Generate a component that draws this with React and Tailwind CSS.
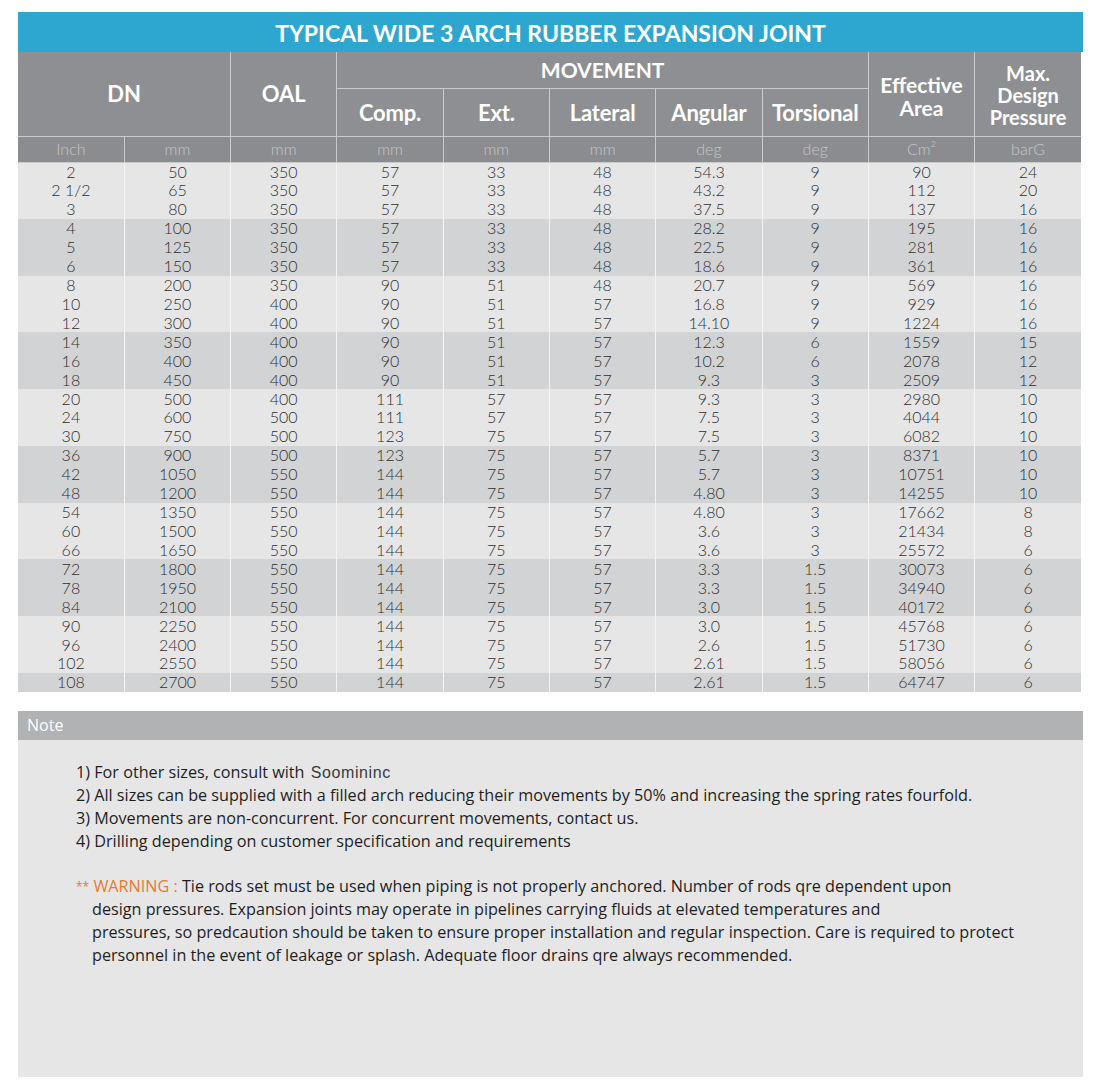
import React from 'react';

const rows = [
    ['2', '50', '350', '57', '33', '48', '54.3', '9', '90', '24'],
    ['2 1/2', '65', '350', '57', '33', '48', '43.2', '9', '112', '20'],
    ['3', '80', '350', '57', '33', '48', '37.5', '9', '137', '16'],
    ['4', '100', '350', '57', '33', '48', '28.2', '9', '195', '16'],
    ['5', '125', '350', '57', '33', '48', '22.5', '9', '281', '16'],
    ['6', '150', '350', '57', '33', '48', '18.6', '9', '361', '16'],
    ['8', '200', '350', '90', '51', '48', '20.7', '9', '569', '16'],
    ['10', '250', '400', '90', '51', '57', '16.8', '9', '929', '16'],
    ['12', '300', '400', '90', '51', '57', '14.10', '9', '1224', '16'],
    ['14', '350', '400', '90', '51', '57', '12.3', '6', '1559', '15'],
    ['16', '400', '400', '90', '51', '57', '10.2', '6', '2078', '12'],
    ['18', '450', '400', '90', '51', '57', '9.3', '3', '2509', '12'],
    ['20', '500', '400', '111', '57', '57', '9.3', '3', '2980', '10'],
    ['24', '600', '500', '111', '57', '57', '7.5', '3', '4044', '10'],
    ['30', '750', '500', '123', '75', '57', '7.5', '3', '6082', '10'],
    ['36', '900', '500', '123', '75', '57', '5.7', '3', '8371', '10'],
    ['42', '1050', '550', '144', '75', '57', '5.7', '3', '10751', '10'],
    ['48', '1200', '550', '144', '75', '57', '4.80', '3', '14255', '10'],
    ['54', '1350', '550', '144', '75', '57', '4.80', '3', '17662', '8'],
    ['60', '1500', '550', '144', '75', '57', '3.6', '3', '21434', '8'],
    ['66', '1650', '550', '144', '75', '57', '3.6', '3', '25572', '6'],
    ['72', '1800', '550', '144', '75', '57', '3.3', '1.5', '30073', '6'],
    ['78', '1950', '550', '144', '75', '57', '3.3', '1.5', '34940', '6'],
    ['84', '2100', '550', '144', '75', '57', '3.0', '1.5', '40172', '6'],
    ['90', '2250', '550', '144', '75', '57', '3.0', '1.5', '45768', '6'],
    ['96', '2400', '550', '144', '75', '57', '2.6', '1.5', '51730', '6'],
    ['102', '2550', '550', '144', '75', '57', '2.61', '1.5', '58056', '6'],
    ['108', '2700', '550', '144', '75', '57', '2.61', '1.5', '64747', '6'],
];

const units = ['Inch', 'mm', 'mm', 'mm', 'mm', 'mm', 'deg', 'deg', 'Cm²', 'barG'];

export default function App() {
    const head = 'border border-[#c9cacc] text-white font-bold text-center align-middle';
    return (
        <div className="bg-white w-[1101px] h-[1090px] pt-3 px-[18px] font-['Lato',sans-serif]">
            {/* Title */}
            <div className="h-10 bg-[#2ea7d0] flex items-center justify-center pt-0.5 text-white font-bold text-[23px]">
                TYPICAL WIDE 3 ARCH RUBBER EXPANSION JOINT
            </div>

            <table className="w-[1063px] table-fixed border-collapse">
                <colgroup>
                    {units.map((u, i) => <col key={i} className="w-[106.3px]" />)}
                </colgroup>
                <thead className="bg-[#8e8f92]">
                    <tr className="h-9">
                        <th rowSpan={2} colSpan={2} className={`${head} border-t-0 border-l-0 text-[22px]`}>DN</th>
                        <th rowSpan={2} className={`${head} border-t-0 text-[22px]`}>OAL</th>
                        <th colSpan={5} className={`${head} border-t-0 text-[21px] leading-none`}>MOVEMENT</th>
                        <th rowSpan={2} className={`${head} border-t-0 text-[21px] leading-[23px] pt-1`}>Effective<br />Area</th>
                        <th rowSpan={2} className={`${head} border-t-0 border-r-0 text-[20px] leading-[22px] pt-0.5`}>Max.<br />Design<br />Pressure</th>
                    </tr>
                    <tr className="h-[48px]">
                        {['Comp.', 'Ext.', 'Lateral', 'Angular', 'Torsional'].map(t => (
                            <th key={t} className={`${head} text-[22px] tracking-[-0.2px]`}>{t}</th>
                        ))}
                    </tr>
                    <tr className="h-[26px] bg-[#8b8c8f]">
                        {units.map((u, i) => (
                            <td key={i} className={`border border-[#c9cacc] text-center text-[#c6c7c9] text-[16px] font-light ${i === 0 ? 'border-l-0' : ''} ${i === 9 ? 'border-r-0' : ''}`}>{u}</td>
                        ))}
                    </tr>
                </thead>
                <tbody>
                    {rows.map((r, ri) => (
                        <tr key={ri} className={`h-[18.93px] ${Math.floor(ri / 3) % 2 === 0 ? 'bg-[#e6e6e7]' : 'bg-[#d2d3d5]'}`}>
                            {r.map((c, ci) => (
                                <td key={ci} className={`p-0 text-center text-[16px] leading-[18px] font-light text-[#2f2f2f] ${ci < 9 ? 'border-r border-[#f4f4f4]' : ''}`}>{c}</td>
                            ))}
                        </tr>
                    ))}
                </tbody>
            </table>

            {/* Note */}
            <div className="mt-[19px] h-[29px] bg-[#b1b2b4] flex items-center pl-[9px] text-white text-[16px] font-['Open_Sans',sans-serif]">
                Note
            </div>
            <div className="h-[337px] bg-[#e6e6e7] pt-[21px] pl-[58px] text-[16.2px] leading-[23px] text-[#1e1e1e] font-['Open_Sans',sans-serif]">
                <p>1) For other sizes, consult with <span className="font-['Liberation_Sans',sans-serif] text-[16px] tracking-[0.6px] text-[#3a3a3a] ml-0.5">Soomininc</span></p>
                <p>2) All sizes can be supplied with a filled arch reducing their movements by 50% and increasing the spring rates fourfold.</p>
                <p>3) Movements are non-concurrent. For concurrent movements, contact us.</p>
                <p>4) Drilling depending on customer specification and requirements</p>

                <p className="mt-[22px]">
                    <span className="text-[#e87a2e]"><span className="text-[12px] align-top">**</span> WARNING : </span>
                    Tie rods set must be used when piping is not properly anchored. Number of rods qre dependent upon
                </p>
                <div className="pl-4">
                    <p>design pressures. Expansion joints may operate in pipelines carrying fluids at elevated temperatures and</p>
                    <p>pressures, so predcaution should be taken to ensure proper installation and regular inspection. Care is required to protect</p>
                    <p>personnel in the event of leakage or splash. Adequate floor drains qre always recommended.</p>
                </div>
            </div>
        </div>
    );
}
